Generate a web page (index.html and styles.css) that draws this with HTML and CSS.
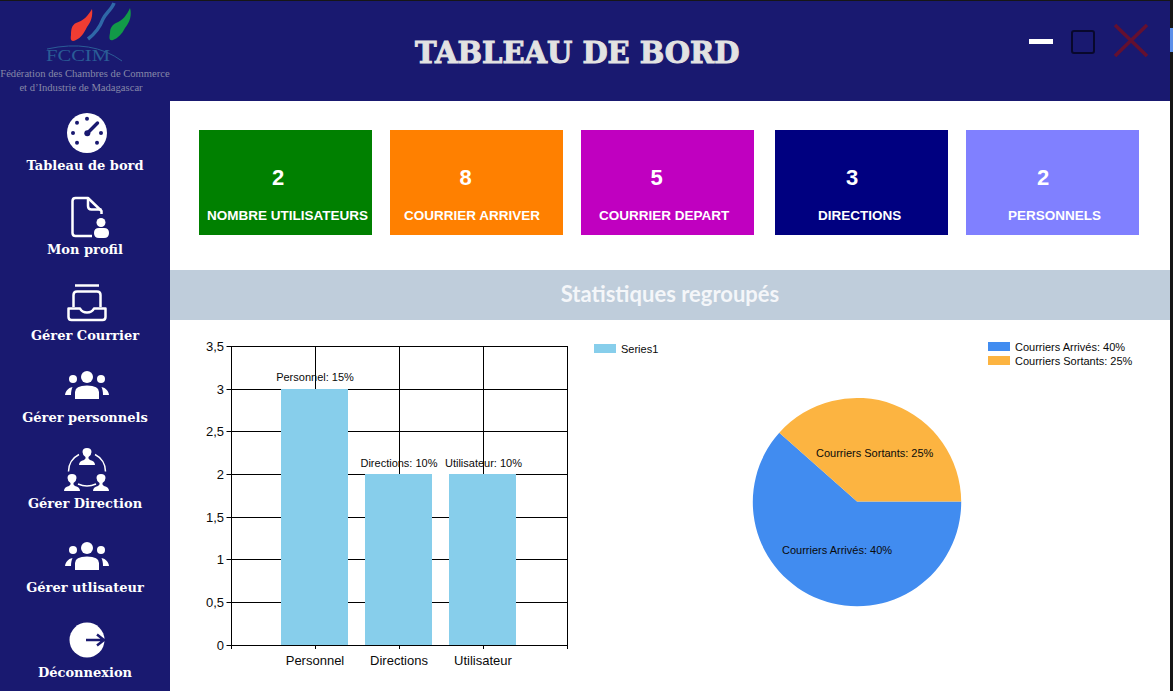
FILE: index.html
```html
<!DOCTYPE html>
<html lang="fr">

<head>
  <meta charset="utf-8">
  <title>Tableau de bord</title>
  <link rel="stylesheet" href="styles.css">
</head>

<body>
  <div class="window">
    <header class="topbar">
      <div class="logo">
        <svg class="logo-mark" viewBox="0 0 170 66" width="170" height="66">
          <path fill="#f03c32" d="M92 8 C93 15 91 21 87 26 C84 32 81 37 76 39 C72 41 70 40 71 34 C71 28 72 24 76 22 C83 20 88 15 92 8 Z" />
          <path fill="none" stroke="#2f68a8" stroke-width="3.5" d="M114 2 C112 8 106 12 103 18 C100 26 96 32 88 38" />
          <path fill="#129a48" d="M130 7 C132 14 130 21 125 27 C122 33 118 37 113 39 C109 40 109 37 110 32 C110 27 112 24 116 22 C122 20 127 14 130 7 Z" />
          <path fill="none" stroke="#2a5c96" d="M47 48 Q92 38 122 60" />
          <text class="logo-word" x="46" y="60" textLength="64" lengthAdjust="spacingAndGlyphs">FCCIM</text>
        </svg>
        <p class="logo-text">Fédération des Chambres de Commerce</p>
        <p class="logo-text logo-text-short">et d’Industrie de Madagascar</p>
      </div>
      <h1 class="title">TABLEAU DE BORD</h1>
      <div class="controls">
        <span class="btn-min"></span>
        <span class="btn-max"></span>
        <svg class="btn-close" viewBox="0 0 34 33" width="34" height="33">
          <path d="M1 1 L33 32 M33 1 L1 32" />
        </svg>
      </div>
    </header>

    <div class="content">
      <nav class="sidebar">
        <a class="nav-item">
          <svg viewBox="65 111 44 44" width="44" height="44">
            <circle fill="#fff" cx="87" cy="133" r="20" />
            <g fill="#191970">
              <circle cx="87" cy="118.7" r="2" />
              <circle cx="77" cy="122.7" r="2" />
              <circle cx="73" cy="133" r="2" />
              <circle cx="101" cy="133" r="2" />
              <circle cx="77" cy="142.7" r="2" />
              <circle cx="97" cy="142.7" r="2" />
              <circle cx="87.3" cy="133.3" r="3" />
            </g>
            <path stroke="#191970" stroke-width="3.4" stroke-linecap="round" d="M87.3 133.3 L97.5 123" />
          </svg>
          <span>Tableau de bord</span>
        </a>
        <a class="nav-item">
          <svg viewBox="65 195 44 44" width="44" height="44">
            <path fill="none" stroke="#fff" stroke-width="2.5" stroke-linejoin="round" d="M92 236 H75.5 q-3 0 -3 -3 V201 q0 -3 3 -3 H88 L101.5 211 V214" />
            <path fill="none" stroke="#fff" stroke-width="2.5" d="M88 198 V206 q0 3.5 3.5 3.5 H101.5" />
            <circle fill="#fff" cx="101" cy="222.5" r="4.5" />
            <path fill="#fff" d="M94 233 q0 -5 5 -5 h5 q5 0 5 5 q0 5 -5 5 h-5 q-5 0 -5 -5 z" />
          </svg>
          <span>Mon profil</span>
        </a>
        <a class="nav-item">
          <svg viewBox="65 281 44 44" width="44" height="44">
            <g fill="none" stroke="#fff" stroke-width="2.5">
              <path d="M75 285.5 H99" />
              <path d="M73.5 307 V295 q0 -3.5 3.5 -3.5 H97 q3.5 0 3.5 3.5 V307" />
              <path stroke-linejoin="round" d="M68.5 308.5 H80 c1.5 3 3.5 4 7 4 s5.5 -1 7 -4 H105.5 V317 q0 3 -3 3 H71.5 q-3 0 -3 -3 Z" />
            </g>
          </svg>
          <span>Gérer Courrier</span>
        </a>
        <a class="nav-item">
          <svg viewBox="65 363 44 44" width="44" height="44">
            <g fill="#fff">
              <circle cx="87" cy="377" r="6" />
              <circle cx="73" cy="379" r="4" />
              <circle cx="101" cy="379" r="4" />
              <path d="M75 399 V392 q0 -6.5 12 -6.5 q12 0 12 6.5 V399 Z" />
              <path d="M65 395 C65.5 391 68 388 72.5 387 C71.5 389 71 392 71 395 Z" />
              <path d="M109 395 C108.5 391 106 388 101.5 387 C102.5 389 103 392 103 395 Z" />
            </g>
          </svg>
          <span>Gérer personnels</span>
        </a>
        <a class="nav-item">
          <svg viewBox="65 449 44 44" width="44" height="44">
            <defs>
              <path id="person" fill="#fff" d="M-8 17 q0 -4 5 -5 l1.5 -1.5 v-1.5 q-3 -2 -3 -5 q0 -4 4.5 -4 t4.5 4 q0 3 -3 5 v1.5 l1.5 1.5 q5 1 5 5 z" />
            </defs>
            <use href="#person" transform="translate(87 448)" />
            <use href="#person" transform="translate(72 474)" />
            <use href="#person" transform="translate(101 474)" />
            <path fill="none" stroke="#fff" stroke-width="1.5" d="M68.5 471.5 A19 19 0 0 1 79 454.5 M95 454.5 A19 19 0 0 1 105.5 471.5 M78 484 Q87 488 96 484" />
          </svg>
          <span>Gérer Direction</span>
        </a>
        <a class="nav-item">
          <svg viewBox="65 362 44 44" width="44" height="44">
            <g fill="#fff">
              <circle cx="87" cy="377" r="6" />
              <circle cx="73" cy="379" r="4" />
              <circle cx="101" cy="379" r="4" />
              <path d="M75 399 V392 q0 -6.5 12 -6.5 q12 0 12 6.5 V399 Z" />
              <path d="M65 395 C65.5 391 68 388 72.5 387 C71.5 389 71 392 71 395 Z" />
              <path d="M109 395 C108.5 391 106 388 101.5 387 C102.5 389 103 392 103 395 Z" />
            </g>
          </svg>
          <span>Gérer utlisateur</span>
        </a>
        <a class="nav-item">
          <svg viewBox="65 618 44 44" width="44" height="44">
            <circle fill="#fff" cx="87" cy="640" r="17.5" />
            <path fill="none" stroke="#191970" stroke-width="2.5" d="M86 640 H104 M97 634.5 L104 640 L97 645.5" />
          </svg>
          <span>Déconnexion</span>
        </a>
      </nav>

      <main class="main">
        <section class="stats">
          <div class="stat stat-users">
            <div class="stat-num">2</div>
            <div class="stat-label">NOMBRE UTILISATEURS</div>
          </div>
          <div class="stat stat-arrive">
            <div class="stat-num">8</div>
            <div class="stat-label">COURRIER ARRIVER</div>
          </div>
          <div class="stat stat-depart">
            <div class="stat-num">5</div>
            <div class="stat-label">COURRIER DEPART</div>
          </div>
          <div class="stat stat-directions">
            <div class="stat-num">3</div>
            <div class="stat-label">DIRECTIONS</div>
          </div>
          <div class="stat stat-personnel">
            <div class="stat-num">2</div>
            <div class="stat-label">PERSONNELS</div>
          </div>
        </section>

        <h2 class="band">Statistiques regroupés</h2>

        <svg class="charts" viewBox="170 320 1000 371" width="1000" height="371">
          <!-- barres -->
          <g fill="#87ceeb">
            <rect x="281" y="389" width="67" height="256" />
            <rect x="365" y="474" width="67" height="171" />
            <rect x="449" y="474" width="67" height="171" />
          </g>
          <g class="grid">
            <path d="M226.5 346.5 H567.5 M226.5 389.5 H281 M348 389.5 H567.5 M226.5 431.5 H281 M348 431.5 H567.5" />
            <path d="M226.5 474.5 H281 M348 474.5 H365 M516 474.5 H567.5" />
            <path d="M226.5 517.5 H281 M348 517.5 H365 M432 517.5 H449 M516 517.5 H567.5" />
            <path d="M226.5 559.5 H281 M348 559.5 H365 M432 559.5 H449 M516 559.5 H567.5" />
            <path d="M226.5 602.5 H281 M348 602.5 H365 M432 602.5 H449 M516 602.5 H567.5" />
            <path d="M226.5 645.5 H567.5" />
            <path d="M231.5 346 V649 M567.5 346 V649" />
            <path d="M315.5 346 V389 M399.5 346 V474 M483.5 346 V474 M315.5 645 V649 M399.5 645 V649 M483.5 645 V649" />
          </g>
          <g class="axis-y">
            <text x="224" y="351">3,5</text>
            <text x="224" y="394">3</text>
            <text x="224" y="436">2,5</text>
            <text x="224" y="479">2</text>
            <text x="224" y="522">1,5</text>
            <text x="224" y="564">1</text>
            <text x="224" y="607">0,5</text>
            <text x="224" y="650">0</text>
          </g>
          <g class="axis-x">
            <text x="315" y="665">Personnel</text>
            <text x="399" y="665">Directions</text>
            <text x="483" y="665">Utilisateur</text>
          </g>
          <g class="point-label">
            <text x="315" y="381">Personnel: 15%</text>
            <text x="399" y="467">Directions: 10%</text>
            <text x="483.5" y="467">Utilisateur: 10%</text>
          </g>
          <rect fill="#87ceeb" x="594" y="344" width="22" height="9" />
          <text class="legend" x="621" y="353">Series1</text>

          <!-- camembert -->
          <path fill="#418cf0" d="M857 501.5 L779.3 432.7 A104.2 104.2 0 1 0 961.2 501.5 Z" />
          <path fill="#fcb441" d="M857 501.5 L961.2 501.5 A104.2 104.2 0 0 0 779.3 432.7 Z" />
          <text class="legend" x="816" y="457">Courriers Sortants: 25%</text>
          <text class="legend" x="782" y="554">Courriers Arrivés: 40%</text>
          <rect fill="#418cf0" x="988" y="342" width="22" height="9" />
          <rect fill="#fcb441" x="988" y="356" width="22" height="9" />
          <text class="legend" x="1015" y="351">Courriers Arrivés: 40%</text>
          <text class="legend" x="1015" y="365">Courriers Sortants: 25%</text>
        </svg>
      </main>
    </div>
  </div>

  <div class="edge">
    <div class="edge-tab"></div>
  </div>
</body>

</html>
```

FILE: styles.css
```css
html,
body {
  height: 100%;
}

body {
  margin: 0;
  display: flex;
  overflow: hidden;
  background-color: #161616;
  font-family: "Liberation Sans", sans-serif;
}

.window {
  width: 1170px;
  height: 690px;
  margin-top: 1px;
  display: flex;
  flex-direction: column;
  background-color: white;
}

.edge {
  flex: 1;
  padding-top: 28px;
}

.edge-tab {
  height: 24px;
  background-color: #5b8fe8;
}

.topbar {
  height: 100px;
  display: flex;
  background-color: #191970;
}

.logo {
  width: 170px;
  flex-shrink: 0;
}

.logo-mark {
  display: block;
}

.logo-word {
  font-family: "Liberation Serif", serif;
  font-size: 17px;
  fill: #2a5c96;
}

.logo-text {
  margin: 0;
  height: 14px;
  font-family: "Liberation Serif", serif;
  font-size: 10.6px;
  line-height: 14px;
  text-align: center;
  white-space: nowrap;
  color: #8688a8;
}

.logo-text-short {
  padding-right: 8px;
}

.title {
  margin: 0 0 0 245px;
  font-family: "DejaVu Serif", serif;
  font-size: 29px;
  font-weight: 700;
  line-height: 104px;
  color: #e2e2e2;
  -webkit-text-stroke: 1px #e2e2e2;
  white-space: nowrap;
}

.controls {
  margin-left: auto;
  padding: 23px 22px 0 0;
  display: flex;
  align-items: flex-start;
}

.btn-min {
  width: 24px;
  height: 5px;
  margin-top: 15px;
  background-color: white;
}

.btn-max {
  width: 20px;
  height: 20px;
  margin: 6px 0 0 18px;
  border: 2px solid #08082c;
  border-radius: 3px;
}

.btn-close {
  margin-left: 19px;
}

.btn-close path {
  fill: none;
  stroke: #641030;
  stroke-width: 3.5;
}

.content {
  flex: 1;
  display: flex;
  min-height: 0;
}

.sidebar {
  width: 170px;
  flex-shrink: 0;
  padding-top: 10px;
  display: grid;
  grid-template-rows: 84px 86px 82px 86px 84px 85px 73px;
  background-color: #191970;
}

.nav-item {
  display: flex;
  flex-direction: column;
  align-items: center;
  color: white;
  font-family: "DejaVu Serif", serif;
  font-size: 13px;
  font-weight: 700;
}

.nav-item svg {
  display: block;
  overflow: visible;
  margin-left: 4px;
}

.nav-item span {
  line-height: 22px;
  white-space: nowrap;
}

.main {
  flex: 1;
  min-width: 0;
}

.stats {
  height: 105px;
  padding: 29px 0 0 29px;
  display: flex;
}

.stat {
  width: 173px;
  height: 105px;
  margin-right: 18px;
  color: white;
  font-weight: 700;
}

.stat-num {
  padding: 36px 22px 0 0;
  font-size: 22px;
  line-height: 24px;
  text-align: center;
}

.stat-label {
  margin-top: 18px;
  font-size: 13.5px;
  line-height: 16px;
  white-space: nowrap;
}

.stat-users {
  background-color: green;
}

.stat-users .stat-num {
  padding-right: 15px;
}

.stat-users .stat-label {
  padding-left: 8px;
}

.stat-arrive {
  background-color: #ff8000;
}

.stat-arrive .stat-label {
  padding-left: 14px;
}

.stat-depart {
  margin-right: 21px;
  background-color: #c000c0;
}

.stat-depart .stat-label {
  padding-left: 18px;
}

.stat-directions {
  background-color: navy;
}

.stat-directions .stat-num {
  padding-right: 19px;
}

.stat-directions .stat-label {
  padding-left: 43px;
}

.stat-personnel {
  background-color: #8080ff;
}

.stat-personnel .stat-num {
  padding-right: 19px;
}

.stat-personnel .stat-label {
  padding-left: 42px;
}

.band {
  height: 50px;
  margin: 35px 0 0;
  background-color: #bfcddb;
  color: #f4f6f9;
  font-family: "Lato", sans-serif;
  font-size: 22px;
  font-weight: 700;
  line-height: 48px;
  text-align: center;
}

.charts {
  display: block;
}

.grid path {
  fill: none;
  stroke: black;
}

.charts text {
  font-family: "Liberation Sans", sans-serif;
  fill: #0a0a0a;
}

.axis-y text {
  font-size: 13px;
  text-anchor: end;
}

.axis-x text {
  font-size: 13px;
  text-anchor: middle;
}

.point-label text {
  font-size: 11px;
  text-anchor: middle;
}

.charts .legend {
  font-size: 11px;
}
```
